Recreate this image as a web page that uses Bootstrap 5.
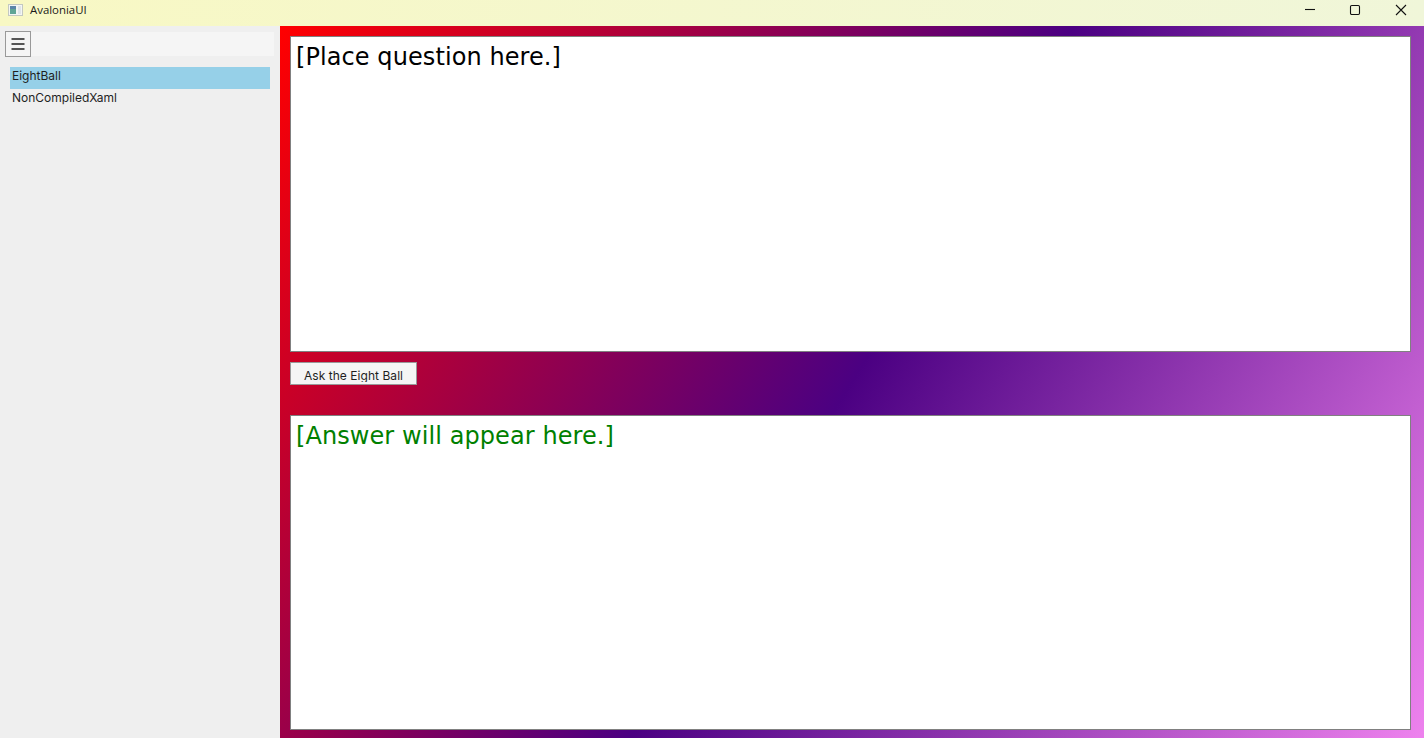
<!DOCTYPE html>
<html>
<head>
    <title>AvaloniaUI</title>
    <link rel="stylesheet" href="https://cdn.jsdelivr.net/npm/bootstrap@5.3.2/dist/css/bootstrap.min.css">
    <style>
        body { background: #efefef; overflow: hidden; font-family: "Inter", sans-serif; }
        .app-shell { height: 738px; }
        .title-strip { height: 26px; background: linear-gradient(90deg, #f8f8c4, #f0f6d9); font-family: "Open Sans", sans-serif; font-size: 11.4px; line-height: 20px; color: #1a1a1a; }
        .app-icon { margin: 4px 7px 0 8px; }
        .win-btn { width: 46px; height: 26px; padding-top: 4px; }
        .win-btn-first { padding-left: 2px; }
        .side-pane { width: 280px; background: #efefef; font-size: 12px; color: #1f1f1f; }
        .burger-strip { margin: 6px 6px 0 5px; height: 24px; background: #f5f5f5; }
        .burger-btn { width: 26px; height: 26px; padding: 0; position: relative; top: -1px; background: #f5f5f5; border: 1px solid #999; border-radius: 0; }
        .burger-btn:hover { background: #f5f5f5; border-color: #999; }
        .page-list { margin: 11px 10px 0; border-radius: 0; }
        .page-list .list-group-item { height: 22px; padding: 0 2px; background: transparent; border: 0; color: #1f1f1f; line-height: 18px; font-size: 12px; }
        .page-list .list-group-item.active { background: #96d0e8; color: #1f1f1f; }
        .main-pane { background: linear-gradient(121.9deg, #f00 0%, #4b0082 50%, #ee82ee 100%); padding: 10px 13px 8px 10px; }
        .text-pane { background: #fff; border: 1px solid #808080; font-family: "DejaVu Sans", sans-serif; font-size: 24px; letter-spacing: 0.08px; line-height: 30px; padding: 5px 5px 3px; color: #000; }
        .pane-top { height: 316px; }
        .pane-bottom { height: 315px; color: #008000; }
        .ask-btn { width: 127px; height: 23px; padding: 2px 0 0; margin: 10px 0 30px; background: #f5f5f5; border: 1px solid #999; border-radius: 0; color: #1f1f1f; font-size: 12px; letter-spacing: 0.05px; line-height: 16px; }
        .ask-btn:hover { background: #f5f5f5; color: #1f1f1f; border-color: #999; }
        .ask-clip { display: block; height: 14px; overflow: hidden; }
    </style>
</head>
<body>
    <div class="app-shell d-flex flex-column">
        <div class="title-strip d-flex align-items-start">
            <svg class="app-icon" width="15" height="12" viewBox="0 0 15 12">
                <rect x="0.5" y="0.5" width="14" height="11" fill="#f4f6f4" stroke="#c3c8c2"/>
                <rect x="2" y="2" width="6" height="8" fill="#5fa596"/>
                <rect x="2" y="2" width="6" height="3" fill="#5b85a8"/>
                <rect x="10" y="2" width="3" height="8" fill="#dfe5e9"/>
            </svg>
            <span class="flex-grow-1 pt-1 lh-1">AvaloniaUI</span>
            <div class="win-btn win-btn-first d-flex justify-content-center">
                <svg width="12" height="12" viewBox="0 0 12 12"><path d="M1 5.5h10" stroke="#111" stroke-width="1.1" fill="none"/></svg>
            </div>
            <div class="win-btn d-flex justify-content-center">
                <svg width="12" height="12" viewBox="0 0 12 12"><rect x="1.5" y="1.5" width="9" height="9" rx="1.2" stroke="#111" stroke-width="1.1" fill="none"/></svg>
            </div>
            <div class="win-btn d-flex justify-content-center">
                <svg width="12" height="12" viewBox="0 0 12 12"><path d="M1 1l10 10M11 1L1 11" stroke="#111" stroke-width="1.1" fill="none"/></svg>
            </div>
        </div>
        <div class="d-flex flex-grow-1">
            <div class="side-pane flex-shrink-0">
                <div class="burger-strip">
                    <button class="btn burger-btn d-flex align-items-center justify-content-center">
                        <svg width="14" height="12" viewBox="0 0 14 12"><path d="M0.5 1h13M0.5 6h13M0.5 11h13" stroke="#222" stroke-width="1.3" fill="none"/></svg>
                    </button>
                </div>
                <div class="list-group page-list">
                    <div class="list-group-item active">EightBall</div>
                    <div class="list-group-item">NonCompiledXaml</div>
                </div>
            </div>
            <div class="main-pane flex-grow-1 d-flex flex-column align-items-start">
                <div class="text-pane pane-top w-100">[Place question here.]</div>
                <button class="btn ask-btn"><span class="ask-clip">Ask the Eight Ball</span></button>
                <div class="text-pane pane-bottom w-100">[Answer will appear here.]</div>
            </div>
        </div>
    </div>
    <script src="https://cdn.jsdelivr.net/npm/bootstrap@5.3.2/dist/js/bootstrap.bundle.min.js"></script>
</body>
</html>
